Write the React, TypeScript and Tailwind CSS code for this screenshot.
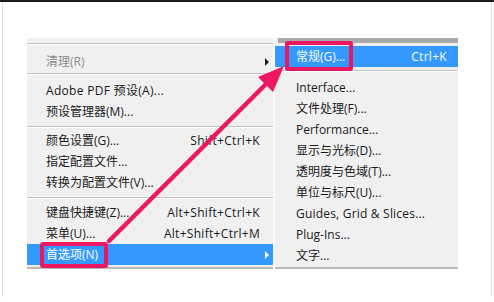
import React from "react";

const FONT = "font-['Open_Sans','Noto_Sans_CJK_SC',sans-serif]";

function Arrow({ white }: { white?: boolean }) {
  return (
    <div
      className={
        "w-0 h-0 border-y-[4px] border-y-transparent border-l-[4px] " +
        (white ? "border-l-white" : "border-l-[#1e1e1e]")
      }
    />
  );
}

function LRow({
  label,
  shortcut,
  sub,
  disabled,
  active,
  latin,
}: {
  label: string;
  shortcut?: string;
  sub?: boolean;
  disabled?: boolean;
  active?: boolean;
  latin?: boolean;
}) {
  return (
    <div
      className={
        "flex items-center h-[21px] pl-[19px] " +
        (active ? "bg-[#3399ff] text-white" : disabled ? "text-[#8c8c8c]" : "text-[#1a1a1a]")
      }
    >
      <span className={"whitespace-nowrap " + (latin ? "tracking-[0.3px]" : "")}>{label}</span>
      <span className="flex-1" />
      {shortcut && <span className="whitespace-nowrap tracking-[0.3px]">{shortcut}</span>}
      <div className="w-[13px] pl-[5px] flex items-center">{sub && <Arrow white={active} />}</div>
    </div>
  );
}

function RRow({
  label,
  shortcut,
  active,
  latin,
}: {
  label: string;
  shortcut?: string;
  active?: boolean;
  latin?: boolean;
}) {
  return (
    <div
      className={
        "flex items-center h-[21px] pl-[21px] pr-[11px] " +
        (active ? "bg-[#3399ff] text-white" : "text-[#1a1a1a]")
      }
    >
      <span className={"whitespace-nowrap " + (latin ? "tracking-[0.2px]" : "")}>{label}</span>
      <span className="flex-1" />
      {shortcut && <span className="whitespace-nowrap tracking-[0.3px]">{shortcut}</span>}
    </div>
  );
}

function Sep({ top, bottom }: { top: string; bottom: string }) {
  return (
    <div className={top + " " + bottom}>
      <div className="h-px bg-[#c0c0c0]" />
      <div className="h-px bg-white" />
    </div>
  );
}

export default function App() {
  return (
    <div className={"relative w-[494px] h-[302px] bg-white overflow-hidden text-[12px] leading-none " + FONT}>
      <div className="h-[2px] bg-[#1c1c1c]" />
      <div className="h-[295px] mx-[2px] border-x border-[#e2e2e2] pt-[36px] pl-[24px] flex items-start">
        {/* Left menu */}
        <div className="w-[246px] bg-[#f0f0f0]">
          <div className="h-[5px]" />
          <Sep top="" bottom="mb-[6px]" />
          <LRow label="清理(R)" sub disabled />
          <Sep top="mt-[1px]" bottom="mb-[5px]" />
          <LRow label="Adobe PDF 预设(A)..." latin />
          <LRow label="预设管理器(M)..." />
          <Sep top="mt-[4px]" bottom="mb-[2px]" />
          <LRow label="颜色设置(G)..." shortcut="Shift+Ctrl+K" />
          <LRow label="指定配置文件..." />
          <LRow label="转换为配置文件(V)..." />
          <Sep top="mt-[4px]" bottom="mb-[3px]" />
          <LRow label="键盘快捷键(Z)..." shortcut="Alt+Shift+Ctrl+K" />
          <LRow label="菜单(U)..." shortcut="Alt+Shift+Ctrl+M" />
          <LRow label="首选项(N)" sub active />
          <div className="h-[2px]" />
          <div className="h-[2px] bg-[#b9b9b9]" />
        </div>
        {/* Right submenu */}
        <div className="w-[185px] bg-[#f0f0f0] border-l-2 border-[#fafafa]">
          <div className="h-[5px] ml-[3px] bg-[#a9a9a9]" />
          <div className="h-[3px]" />
          <RRow label="常规(G)..." shortcut="Ctrl+K" active />
          <div className="h-[3px]" />
          <Sep top="" bottom="mb-[5px]" />
          <RRow label="Interface..." />
          <RRow label="文件处理(F)..." />
          <RRow label="Performance..." />
          <RRow label="显示与光标(D)..." />
          <RRow label="透明度与色域(T)..." />
          <RRow label="单位与标尺(U)..." />
          <RRow label="Guides, Grid & Slices..." latin />
          <RRow label="Plug-Ins..." />
          <RRow label="文字..." />
          <div className="h-px" />
          <div className="h-[2px] bg-[#b9b9b9]" />
        </div>
      </div>

      {/* Annotation boxes */}
      <div className="absolute left-[285px] top-[41px] w-[68px] h-[30px] border-4 border-[#ec1763] rounded-[3px]" />
      <div className="absolute left-[40px] top-[242px] w-[68px] h-[26px] border-4 border-[#ec1763] rounded-[3px]" />

      {/* Annotation arrow */}
      <svg className="absolute left-0 top-0 pointer-events-none" width="494" height="302" viewBox="0 0 494 302">
        <line x1="109" y1="241" x2="268" y2="82" stroke="#ec1763" strokeWidth="4.5" strokeLinecap="round" />
        <polygon points="284,66 258,77 273,92" fill="#ec1763" />
      </svg>
    </div>
  );
}
